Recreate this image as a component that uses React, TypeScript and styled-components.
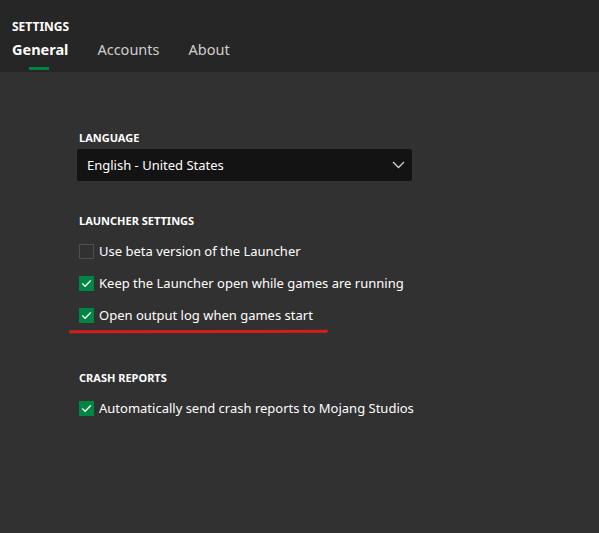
import React, { useState } from "react";
import styled, { createGlobalStyle } from "styled-components";

const GlobalStyle = createGlobalStyle`
  html, body { margin: 0; padding: 0; height: 100%; background: #313131; }
  body { font-family: "Noto Sans", "Open Sans", sans-serif; }
  #root { height: 100%; }
`;

const Page = styled.div`
  position: relative;
  width: 599px;
  height: 533px;
  background: #313131;
  overflow: hidden;
`;

const Header = styled.header`
  height: 72px;
  background: #262626;
  padding: 0 12px;
  box-sizing: border-box;
  display: flex;
  flex-direction: column;
`;

const Title = styled.div`
  padding-top: 19px;
  font-size: 12px;
  line-height: 16px;
  font-weight: 700;
  color: #ffffff;
`;

const Tabs = styled.nav`
  display: flex;
  gap: 29px;
  margin-top: 4px;
`;

const Tab = styled.div<{ $active?: boolean }>`
  position: relative;
  font-size: 14.5px;
  line-height: 20px;
  font-weight: ${({ $active }) => ($active ? 700 : 400)};
  color: ${({ $active }) => ($active ? "#ffffff" : "#cfcfcf")};
  padding-bottom: 13px;
  &::after {
    content: "";
    display: ${({ $active }) => ($active ? "block" : "none")};
    position: absolute;
    left: 17px;
    bottom: 2px;
    width: 20px;
    height: 3px;
    background: #008542;
  }
`;

const Content = styled.main`
  padding: 58px 0 0 77px;
  width: 335px;
`;

const Section = styled.section<{ $gap: number }>`
  margin-bottom: ${({ $gap }) => $gap}px;
`;

const Label = styled.div`
  font-size: 11px;
  line-height: 16px;
  font-weight: 700;
  color: #ffffff;
  padding-left: 2px;
  margin-bottom: 3px;
`;

const Select = styled.div`
  height: 32px;
  background: #131313;
  border-radius: 2px;
  display: flex;
  align-items: center;
  justify-content: space-between;
  padding: 0 7px 0 10px;
  font-size: 13px;
  color: #ffffff;
`;

const Options = styled.div`
  display: flex;
  flex-direction: column;
  gap: 12px;
  margin-top: 12px;
  padding-left: 2px;
`;

const Row = styled.label`
  display: flex;
  align-items: center;
  gap: 5px;
  height: 20px;
  font-size: 13px;
  color: #ffffff;
  cursor: pointer;
  white-space: nowrap;
`;

const Box = styled.span<{ $checked: boolean }>`
  flex-shrink: 0;
  width: 15px;
  height: 15px;
  box-sizing: border-box;
  background: ${({ $checked }) => ($checked ? "#008542" : "transparent")};
  border: ${({ $checked }) => ($checked ? "none" : "1px solid #4e4e4e")};
  display: flex;
  align-items: center;
  justify-content: center;
`;

const Annotation = styled.svg`
  position: absolute;
  left: 69px;
  top: 328px;
`;

function Check() {
  return (
    <svg width="11" height="9" viewBox="0 0 11 9">
      <path d="M1.3 4.6 L4.1 7.2 L9.7 1.5" fill="none" stroke="#ffffff" strokeWidth="1.4" />
    </svg>
  );
}

function Checkbox({ label, initial }: { label: string; initial: boolean }) {
  const [checked, setChecked] = useState(initial);
  return (
    <Row onClick={() => setChecked((prev) => !prev)}>
      <Box $checked={checked}>{checked && <Check />}</Box>
      {label}
    </Row>
  );
}

export default function App() {
  return (
    <Page>
      <GlobalStyle />
      <Header>
        <Title>SETTINGS</Title>
        <Tabs>
          <Tab $active>General</Tab>
          <Tab>Accounts</Tab>
          <Tab>About</Tab>
        </Tabs>
      </Header>
      <Content>
        <Section $gap={32}>
          <Label>LANGUAGE</Label>
          <Select>
            <span>English - United States</span>
            <svg width="13" height="8" viewBox="0 0 13 8">
              <path d="M1 1 L6.5 6.5 L12 1" fill="none" stroke="#d0d0d0" strokeWidth="1.3" />
            </svg>
          </Select>
        </Section>
        <Section $gap={45}>
          <Label>LAUNCHER SETTINGS</Label>
          <Options>
            <Checkbox label="Use beta version of the Launcher" initial={false} />
            <Checkbox label="Keep the Launcher open while games are running" initial={true} />
            <Checkbox label="Open output log when games start" initial={true} />
          </Options>
        </Section>
        <Section $gap={0}>
          <Label>CRASH REPORTS</Label>
          <Options>
            <Checkbox label="Automatically send crash reports to Mojang Studios" initial={true} />
          </Options>
        </Section>
      </Content>
      <Annotation width="260" height="8" viewBox="0 0 260 8">
        <path d="M1.5 3.8 L257.5 3.3" fill="none" stroke="#d41e1e" strokeWidth="3" strokeLinecap="round" />
      </Annotation>
    </Page>
  );
}
